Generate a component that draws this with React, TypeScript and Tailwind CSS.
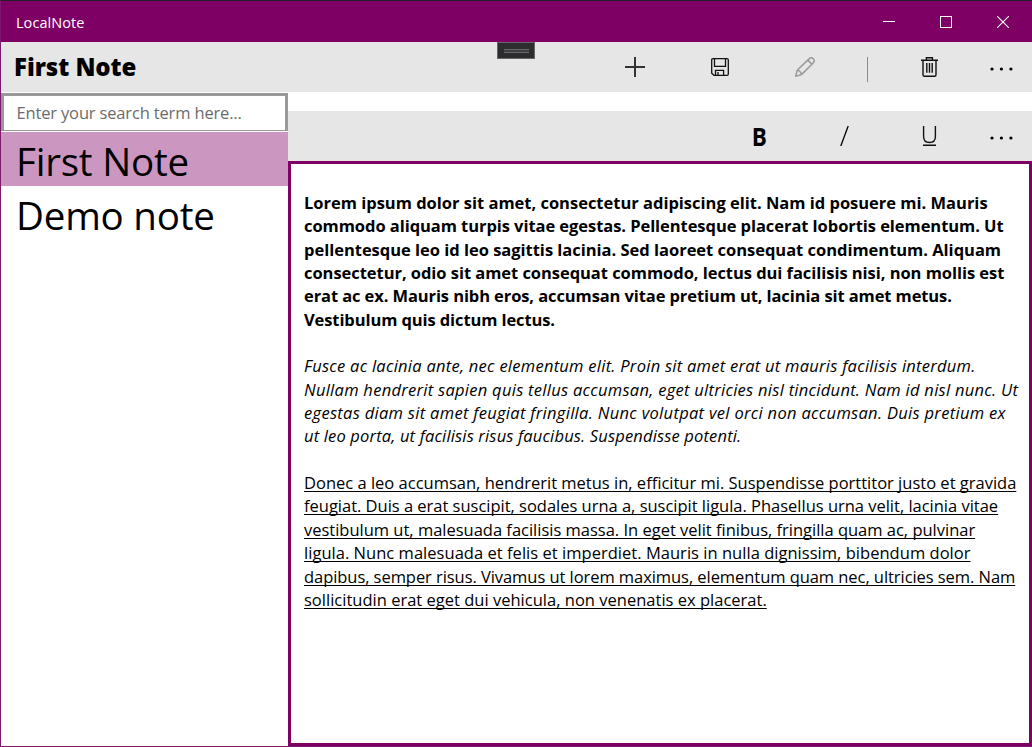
import type { ReactNode } from "react";

type Line = [text: string, tracking: string];

const boldLines: Line[] = [
  ["Lorem ipsum dolor sit amet, consectetur adipiscing elit. Nam id posuere mi. Mauris", "tracking-[-0.01px]"],
  ["commodo aliquam turpis vitae egestas. Pellentesque placerat lobortis elementum. Ut", "tracking-[-0.06px]"],
  ["pellentesque leo id leo sagittis lacinia. Sed laoreet consequat condimentum. Aliquam", "tracking-[-0.02px]"],
  ["consectetur, odio sit amet consequat commodo, lectus dui facilisis nisi, non mollis est", "tracking-[-0.045px]"],
  ["erat ac ex. Mauris nibh eros, accumsan vitae pretium ut, lacinia sit amet metus.", "tracking-[-0.1px]"],
  ["Vestibulum quis dictum lectus.", "tracking-[-0.1px]"],
];
const italicLines: Line[] = [
  ["Fusce ac lacinia ante, nec elementum elit. Proin sit amet erat ut mauris facilisis interdum.", "tracking-[0.26px]"],
  ["Nullam hendrerit sapien quis tellus accumsan, eget ultricies nisl tincidunt. Nam id nisl nunc. Ut", "tracking-[0.275px]"],
  ["egestas diam sit amet feugiat fringilla. Nunc volutpat vel orci non accumsan. Duis pretium ex", "tracking-[0.3px]"],
  ["ut leo porta, ut facilisis risus faucibus. Suspendisse potenti.", "tracking-[0.16px]"],
];
const underlinedLines: Line[] = [
  ["Donec a leo accumsan, hendrerit metus in, efficitur mi. Suspendisse porttitor justo et gravida", "tracking-normal"],
  ["feugiat. Duis a erat suscipit, sodales urna a, suscipit ligula. Phasellus urna velit, lacinia vitae", "tracking-[-0.015px]"],
  ["vestibulum ut, malesuada facilisis massa. In eget velit finibus, fringilla quam ac, pulvinar", "tracking-[-0.01px]"],
  ["ligula. Nunc malesuada et felis et imperdiet. Mauris in nulla dignissim, bibendum dolor", "tracking-[0.03px]"],
  ["dapibus, semper risus. Vivamus ut lorem maximus, elementum quam nec, ultricies sem. Nam", "tracking-[-0.06px]"],
  ["sollicitudin erat eget dui vehicula, non venenatis ex placerat.", "tracking-[0.01px]"],
];

function Paragraph({ lines, className }: { lines: Line[]; className: string }) {
  return (
    <p className={`mb-[23.35px] whitespace-nowrap ${className}`}>
      {lines.map(([text, tracking]) => (
        <span key={text} className={`block ${tracking}`}>
          {text}
        </span>
      ))}
    </p>
  );
}

function Tool({ label, className, children }: { label: string; className: string; children: ReactNode }) {
  return (
    <button aria-label={label} className={`flex h-[50px] items-center justify-center ${className}`}>
      {children}
    </button>
  );
}

function MoreIcon() {
  return (
    <svg width="24" height="4" viewBox="0 0 24 4">
      <circle cx="2" cy="2" r="1.6" />
      <circle cx="11.4" cy="2" r="1.6" />
      <circle cx="20.9" cy="2" r="1.6" />
    </svg>
  );
}

export default function App() {
  return (
    <div className="flex h-[747px] w-[1032px] flex-col overflow-hidden border-b border-l border-t border-b-[#7c1a6e] border-l-[#7c1a6e] border-t-[#221f22] bg-white font-['Open_Sans','Noto_Sans',sans-serif] text-black">
      <header className="flex h-[41px] shrink-0 items-center bg-[#7e0064] pl-[15px] text-white">
        <span className="mt-[3px] text-[14.5px] leading-5 tracking-[0.05px]">LocalNote</span>
        <div className="ml-auto flex pr-px">
          <button aria-label="Minimize" className="flex h-[41px] w-[57px] items-center justify-center">
            <svg width="12" height="12" viewBox="0 0 12 12" fill="none" stroke="white" shapeRendering="crispEdges">
              <path d="M0 5.5H12" />
            </svg>
          </button>
          <button aria-label="Maximize" className="flex h-[41px] w-[57px] items-center justify-center">
            <svg width="12" height="12" viewBox="0 0 12 12" fill="none" stroke="white" shapeRendering="crispEdges">
              <rect x=".5" y=".5" width="11" height="11" />
            </svg>
          </button>
          <button aria-label="Close" className="flex h-[41px] w-[57px] items-center justify-center">
            <svg width="12" height="12" viewBox="0 0 12 12" fill="none" stroke="white" strokeWidth="1.1">
              <path d="M0 0L12 12M12 0L0 12" />
            </svg>
          </button>
        </div>
      </header>

      <div className="relative flex h-[50px] shrink-0 items-center bg-[#e6e6e6] pl-[13px]">
        <h1 className="text-[24px] font-extrabold leading-8 tracking-[-0.05px]">First Note</h1>
        <div className="absolute left-[496px] top-0 flex h-[17px] w-[38px] items-center justify-center border border-[#666] bg-[#2d2d30]">
          <div className="mt-px h-1 w-[25px] border-y border-[#686868] bg-[#3f3f42]" />
        </div>
        <div className="ml-auto flex">
          <Tool label="New note" className="w-[85px]">
            <svg width="20" height="20" viewBox="0 0 20 20" fill="none" stroke="#333" strokeWidth="2">
              <path d="M10 0V20M0 10H20" />
            </svg>
          </Tool>
          <Tool label="Save" className="w-[85px]">
            <svg width="18" height="18" viewBox="0 0 18 18" fill="none" stroke="#111" strokeWidth="1.3">
              <path d="M2 .7H16Q17.3.7 17.3 2V16Q17.3 17.3 16 17.3H3L.7 15.3V2Q.7.7 2 .7ZM3.5.7V8.4H14.5V.7M4.5 17V12.3H12.6V17M7 14V17" />
            </svg>
          </Tool>
          <Tool label="Edit" className="w-[85px]">
            <svg width="20" height="20" viewBox="0 0 20 20" fill="none" stroke="#999" strokeWidth="1.5" strokeLinejoin="round">
              <path d="M.8 19.2L2.2 13.2L14.3 1.6Q16.2-.1 18.2 1.7Q20 3.7 18.4 5.7L6.5 17.6ZM2.2 13.2Q5.5 13.5 6.5 17.6M12.8 3.1L17 7.2" />
            </svg>
          </Tool>
          <div className="flex w-[40px] items-center justify-center">
            <div className="mt-[5px] h-[25px] w-px bg-[#8a8a8a]" />
          </div>
          <Tool label="Delete" className="w-[85px]">
            <svg width="17" height="20" viewBox="0 0 17 20" fill="none" stroke="#111" strokeWidth="1.4">
              <path d="M0 3.2H17M5.4 3V.7H11.4V3M2 3.2V17.7Q2 19.3 3.5 19.3H13.5Q15 19.3 15 17.7V3.2M5.8 6V15.8M8.5 6V15.8M11.2 6V15.8" />
            </svg>
          </Tool>
          <Tool label="More commands" className="w-[60px] pt-[3px]">
            <MoreIcon />
          </Tool>
        </div>
      </div>

      <div className="flex min-h-0 flex-1">
        <aside className="w-[287px] shrink-0 pt-px">
          <input
            aria-label="Search notes"
            placeholder="Enter your search term here..."
            className="block h-[38px] w-[287px] border-x-[3px] border-b border-t-[3px] border-[#999] bg-white pb-[2px] pl-[12.5px] text-[16.5px] tracking-[-0.16px] outline-none placeholder:text-[#6c6c6c]"
          />
          <ul className="mt-px text-[38.5px] leading-[54px]">
            <li className="h-[54px] bg-[#cb97c1] pl-[15px] pt-[2px] tracking-[-0.2px]">First Note</li>
            <li className="h-[54px] pl-[15px] pt-[2px] tracking-[-0.2px]">Demo note</li>
          </ul>
        </aside>
        <main className="flex flex-1 flex-col pt-[19px]">
          <div className="flex h-[50px] shrink-0 items-center justify-end bg-[#e6e6e6]">
            <Tool label="Bold" className="w-[85px]">
              <span className="scale-x-90 text-[25px] font-bold leading-6">B</span>
            </Tool>
            <Tool label="Italic" className="w-[85px]">
              <svg width="9" height="20" viewBox="0 0 9 20" fill="none" stroke="black" strokeWidth="1.3">
                <path d="M8.2 0L.8 20" />
              </svg>
            </Tool>
            <Tool label="Underline" className="w-[85px]">
              <svg width="15" height="20" viewBox="0 0 15 20" fill="none" stroke="#111" strokeWidth="1.4">
                <path d="M1.6 0V10.5Q1.6 16.5 7.5 16.5Q13.4 16.5 13.4 10.5V0M1 19.3H14" />
              </svg>
            </Tool>
            <Tool label="More formatting" className="w-[60px] pt-[3px]">
              <MoreIcon />
            </Tool>
          </div>
          <article className="min-h-0 flex-1 border-[3px] border-[#7e0064] pl-[13px] pt-[27px] text-[16.5px] leading-[23.35px]">
            <Paragraph lines={boldLines} className="font-bold" />
            <Paragraph lines={italicLines} className="italic" />
            <Paragraph lines={underlinedLines} className="underline decoration-1 underline-offset-2 [text-decoration-skip-ink:none]" />
          </article>
        </main>
      </div>
    </div>
  );
}
